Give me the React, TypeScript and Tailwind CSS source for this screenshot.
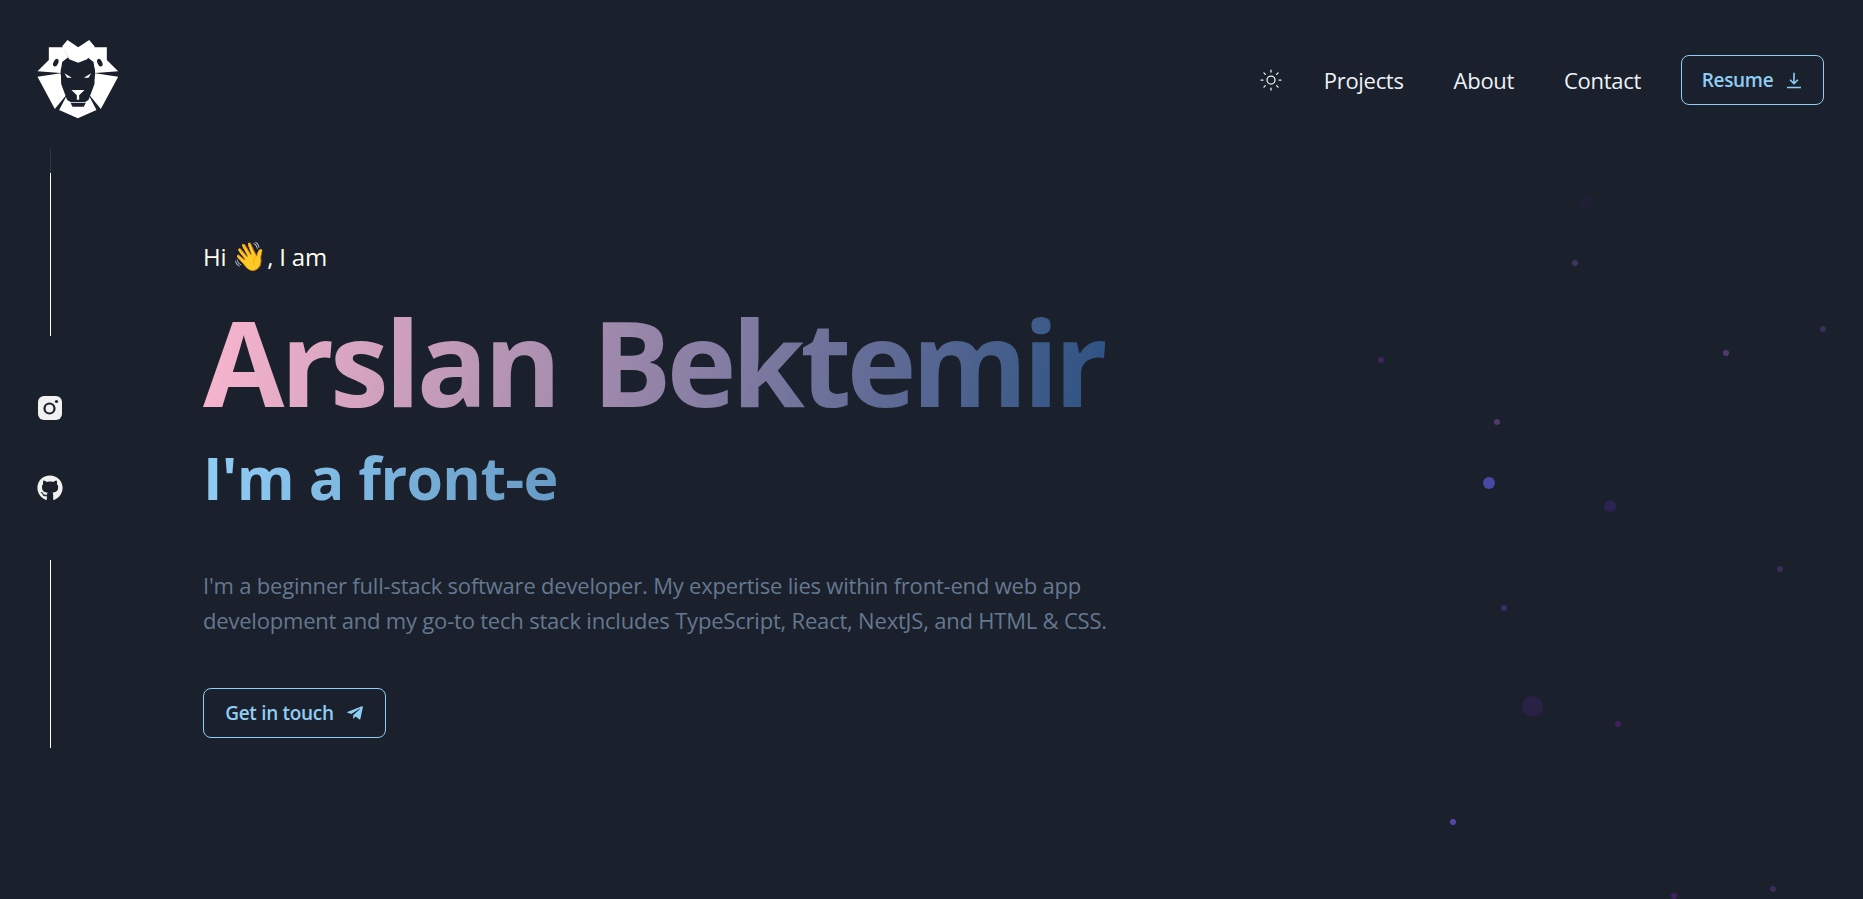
import { Sun } from 'lucide-react'
import { FaGithub, FaTelegramPlane } from 'react-icons/fa'

const particles = [
  'left-[1581px] top-[196px] w-3 h-3 bg-[#211f38]',
  'left-[1572px] top-[260px] w-1.5 h-1.5 bg-[#3f3560]',
  'left-[1723px] top-[350px] w-1.5 h-1.5 bg-[#503a70]',
  'left-[1820px] top-[326px] w-1.5 h-1.5 bg-[#3a2f58]',
  'left-[1378px] top-[357px] w-1.5 h-1.5 bg-[#41235f]',
  'left-[1494px] top-[419px] w-1.5 h-1.5 bg-[#503a70]',
  'left-[1483px] top-[477px] w-3 h-3 bg-[#4749a5]',
  'left-[1604px] top-[500px] w-3 h-3 bg-[#2c2353]',
  'left-[1777px] top-[566px] w-1.5 h-1.5 bg-[#3a2f58]',
  'left-[1501px] top-[605px] w-1.5 h-1.5 bg-[#3a2f66]',
  'left-[1522px] top-[696px] w-[21px] h-[21px] bg-[#2a2245]',
  'left-[1615px] top-[721px] w-1.5 h-1.5 bg-[#41205f]',
  'left-[1450px] top-[819px] w-1.5 h-1.5 bg-[#5a45a5]',
  'left-[1671px] top-[893px] w-1.5 h-1.5 bg-[#41205f]',
  'left-[1770px] top-[886px] w-1.5 h-1.5 bg-[#3a2f58]',
]

function LionLogo() {
  return (
    <svg viewBox="112 115 245 240" className="w-[82px] h-[80px]">
      <g fill="#fff">
        <path d="M187 137 203 118 235 140 268 118 285 138 262 176 235 186 208 176Z" />
        <path d="M147 140H190L205 170 187 184 182 217 113 212 147 178Z" />
        <path d="M321 140H278L263 170 281 184 286 217 355 212 321 178Z" />
        <path d="M113 228 182 218 190 262 200 282 165 325Z" />
        <path d="M355 228 286 218 278 262 268 282 303 325Z" />
        <path d="M178 328 200 286 212 300H256L268 286 290 328 234 353Z" />
      </g>
      <ellipse cx="168" cy="186" rx="7" ry="12" fill="#1a202c" transform="rotate(25 168 186)" />
      <ellipse cx="300" cy="186" rx="7" ry="12" fill="#1a202c" transform="rotate(-25 300 186)" />
      <path d="M198 183 235 188 271 183 285 205 284 250 266 298 256 304H212L202 298 184 250 183 205Z" fill="#1a202c" />
      <path d="M194 218 216 231 202 231Z M274 218 252 231 266 231Z" fill="#fff" />
      <path d="M215 268H254L238 284V297H231V284Z" fill="#fff" />
      <path d="M212 306H258L252 318H218Z" fill="#1a202c" />
    </svg>
  )
}

function InstagramIcon() {
  return (
    <svg viewBox="0 0 24 24" className="w-6 h-6">
      <rect width="24" height="24" x="0" y="0" rx="6" fill="#f1f1f1" />
      <circle cx="11.5" cy="12.5" r="5" fill="none" stroke="#1a202c" strokeWidth="2.2" />
      <circle cx="18.5" cy="5.5" r="1.6" fill="#1a202c" />
    </svg>
  )
}

function DownloadIcon() {
  return (
    <svg viewBox="0 0 16 16" className="w-[18px] h-[18px]" fill="none" stroke="currentColor" strokeWidth="1.4">
      <path d="M8 1.5V11M4.5 7.8 8 11.2l3.5-3.4M1.8 14.6h12.4" />
    </svg>
  )
}

export default function App() {
  return (
    <div className="relative h-screen overflow-hidden bg-[#1a202c] font-['Open_Sans',sans-serif] text-white">
      {particles.map((p) => (
        <div key={p} className={'absolute rounded-full ' + p} />
      ))}

      <header className="relative flex h-[148px] items-start justify-between pl-[37px] pr-[39px] pt-[39px]">
        <LionLogo />
        <nav className="mt-4 flex items-center">
          <Sun size={24} strokeWidth={1.25} className="mr-[41px] text-[#edf2f7]" />
          <a className="mr-[50px] text-[22px] tracking-[-0.3px] text-[#edf2f7]">Projects</a>
          <a className="mr-[50px] text-[22px] tracking-[-0.3px] text-[#edf2f7]">About</a>
          <a className="mr-10 text-[22px] tracking-[-0.3px] text-[#edf2f7]">Contact</a>
          <button className="flex h-[50px] w-[143px] items-center justify-center gap-3 rounded-lg border border-[#90cdf4] text-[19px] font-semibold tracking-[-0.3px] text-[#90cdf4]">
            Resume
            <DownloadIcon />
          </button>
        </nav>
      </header>

      <div className="relative flex">
        <aside className="flex w-[100px] flex-col items-center">
          <div className="h-[25px] w-px bg-white/10" />
          <div className="h-[163px] w-px bg-white" />
          <div className="mt-[60px]">
            <InstagramIcon />
          </div>
          <FaGithub size={26} className="mt-[55px] text-[#f1f1f1]" />
          <div className="mt-[59px] h-[188px] w-px bg-white" />
        </aside>

        <main className="ml-[103px] w-[1000px] pt-[90px]">
          <p className="text-[24px] leading-[34px] tracking-[-0.2px] text-[#fffff0]">
            Hi <span className="text-[28px] leading-[34px]">👋</span>, I am
          </p>
          <h1 className="mt-5 w-[902px] bg-linear-[100deg] from-[#fbb6ce] to-[#2c5282] bg-clip-text text-[118px] font-bold leading-[135px] text-transparent tracking-[-4px] [word-spacing:8px]">
            Arslan <span className="tracking-[-4.7px]">Bektemir</span>
          </h1>
          <h2 className="mt-[9px] w-[902px] bg-linear-to-r from-[#90cdf4] to-[#2c5282] bg-clip-text text-[59px] font-bold leading-[78px] text-transparent tracking-[-0.7px]">
            I'm a front-e
          </h2>
          <p className="mt-[52px] whitespace-nowrap text-[22px] leading-[35px] tracking-[-0.2px] text-[#65788f]">
            I'm a beginner full-stack software developer. My expertise lies within front-end web app
            <br />
            development and my go-to tech stack includes TypeScript, React, NextJS, and HTML &amp; CSS.
          </p>
          <button className="mt-[50px] flex h-[50px] w-[183px] items-center justify-center gap-3 rounded-lg border border-[#90cdf4] text-[19px] font-semibold tracking-[-0.3px] text-[#90cdf4]">
            Get in touch
            <FaTelegramPlane size={18} />
          </button>
        </main>
      </div>
    </div>
  )
}
